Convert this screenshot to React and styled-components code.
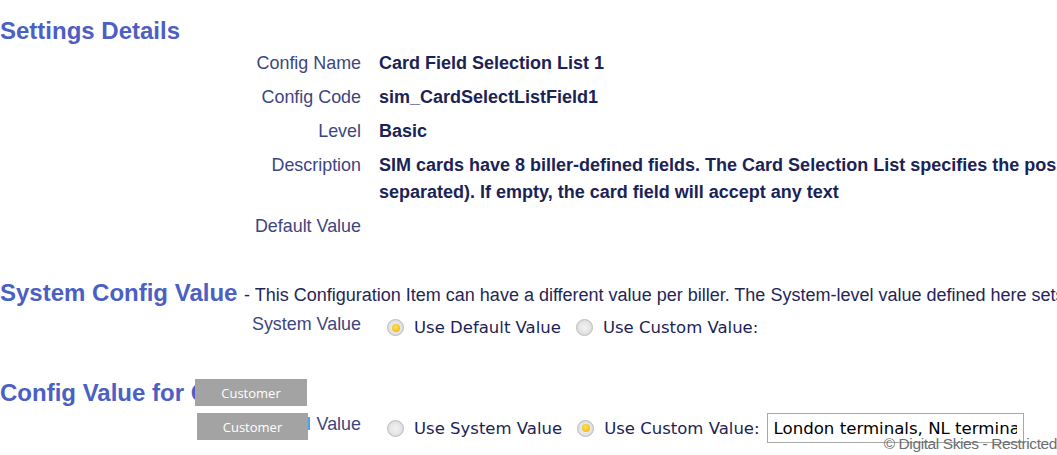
import React from 'react';
import styled, { createGlobalStyle } from 'styled-components';

const GlobalStyle = createGlobalStyle`
  html, body {
    margin: 0;
    padding: 0;
    background: #fff;
    overflow: hidden;
  }
  body {
    font-family: "Liberation Sans", Arial, sans-serif;
  }
`;

const Page = styled.div`
  position: relative;
  width: 1057px;
  height: 455px;
  overflow: hidden;
  padding-top: 16px;
  box-sizing: border-box;
`;

const Section = styled.section`
  margin-top: ${(p) => p.$top || 0}px;
  white-space: nowrap;
`;

const Heading = styled.h2`
  margin: 0;
  font-size: 24px;
  line-height: 30px;
  font-weight: bold;
  color: #4b60c2;
`;

const HeadingNote = styled.span`
  font-size: 18px;
  font-weight: normal;
  color: #1f2658;
`;

const Grid = styled.div`
  display: grid;
  grid-template-columns: 361px auto;
  column-gap: 18px;
  row-gap: 7px;
  margin-top: ${(p) => p.$top || 0}px;
`;

const Label = styled.div`
  position: relative;
  text-align: right;
  font-size: 17.9px;
  line-height: 27px;
  color: #3d4580;
`;

const Covered = styled.span`
  margin-right: 14px;
  color: #4aa3f0;
`;

const Value = styled.div`
  font-size: 18px;
  line-height: 27px;
  font-weight: bold;
  color: #1b2356;
`;

const Line = styled.div`
  white-space: nowrap;
`;

const Choices = styled.div`
  display: flex;
  align-items: center;
  padding-left: 8px;
  margin-top: ${(p) => p.$top || 0}px;
  font-family: "DejaVu Sans", Verdana, sans-serif;
  font-size: 16.5px;
  color: #1b2356;
`;

const Choice = styled.label`
  display: flex;
  align-items: center;
  gap: 10px;
  margin-right: 15px;
`;

const Radio = styled.span`
  width: 17px;
  height: 17px;
  border-radius: 50%;
  box-sizing: border-box;
  background: radial-gradient(circle at 50% 50%, #f2f2f2 0, #e4e4e4 55%, #c9c9c9 100%);
  border: 1px solid #bcbcbc;
  display: flex;
  align-items: center;
  justify-content: center;
  &::after {
    content: '';
    display: ${(p) => (p.$checked ? 'block' : 'none')};
    width: 8px;
    height: 8px;
    border-radius: 50%;
    background: radial-gradient(circle at 45% 40%, #ffe45a 0, #f5c21b 60%, #e0a20d 100%);
  }
`;

const TextInput = styled.input`
  width: 257px;
  height: 30px;
  box-sizing: border-box;
  border: 1px solid #a8a8a8;
  padding: 0 6px;
  margin-left: -8px;
  font-family: "DejaVu Sans", Verdana, sans-serif;
  font-size: 16.6px;
  color: #000;
  background: #fff;
  outline: none;
`;

const Redact = styled.div`
  position: absolute;
  left: ${(p) => p.$x}px;
  top: ${(p) => p.$y}px;
  width: ${(p) => p.$w}px;
  height: 27px;
  background: #a3a3a3;
  color: #fff;
  font-family: "Open Sans", sans-serif;
  font-size: 13px;
  display: flex;
  align-items: center;
  justify-content: center;
`;

const FocusMark = styled.div`
  position: absolute;
  left: 308px;
  top: 417px;
  width: 2px;
  height: 13px;
  background: #4aa3f0;
`;

const Footer = styled.div`
  position: absolute;
  right: 0;
  top: 435px;
  font-size: 15.5px;
  color: #6e6e6e;
  letter-spacing: -0.4px;
  white-space: nowrap;
`;

const details = [
  { label: 'Config Name', value: ['Card Field Selection List 1'] },
  { label: 'Config Code', value: ['sim_CardSelectListField1'] },
  { label: 'Level', value: ['Basic'] },
  {
    label: 'Description',
    value: [
      'SIM cards have 8 biller-defined fields. The Card Selection List specifies the possible values for this card field (comma',
      'separated). If empty, the card field will accept any text',
    ],
  },
  { label: 'Default Value', value: [''] },
];

export default function App() {
  return (
    <Page>
      <GlobalStyle />
      <Section>
        <Heading>Settings Details</Heading>
        <Grid $top={4}>
          {details.map((d) => (
            <React.Fragment key={d.label}>
              <Label>{d.label}</Label>
              <Value>
                {d.value.map((l, i) => (
                  <Line key={i}>{l || '\u00a0'}</Line>
                ))}
              </Value>
            </React.Fragment>
          ))}
        </Grid>
      </Section>

      <Section $top={38}>
        <Heading>
          System Config Value{' '}
          <HeadingNote>
            - This Configuration Item can have a different value per biller. The System-level value defined here sets the default for all billers.
          </HeadingNote>
        </Heading>
        <Grid $top={1}>
          <Label>System Value</Label>
          <Choices $top={6}>
            <Choice>
              <Radio $checked />
              Use Default Value
            </Choice>
            <Choice>
              <Radio />
              Use Custom Value:
            </Choice>
          </Choices>
        </Grid>
      </Section>

      <Section $top={40}>
        <Heading>Config Value for Customer</Heading>
        <Grid $top={3}>
          <Label>
            <Covered>Customer</Covered>Value
          </Label>
          <Choices $top={2}>
            <Choice>
              <Radio />
              Use System Value
            </Choice>
            <Choice>
              <Radio $checked />
              Use Custom Value:
            </Choice>
            <TextInput readOnly value="London terminals, NL terminals, UK terminals" />
          </Choices>
        </Grid>
      </Section>

      <Redact $x={195} $y={379} $w={112}>Customer</Redact>
      <Redact $x={197} $y={413} $w={111}>Customer</Redact>
      <FocusMark />
      <Footer>© Digital Skies - Restricted</Footer>
    </Page>
  );
}
